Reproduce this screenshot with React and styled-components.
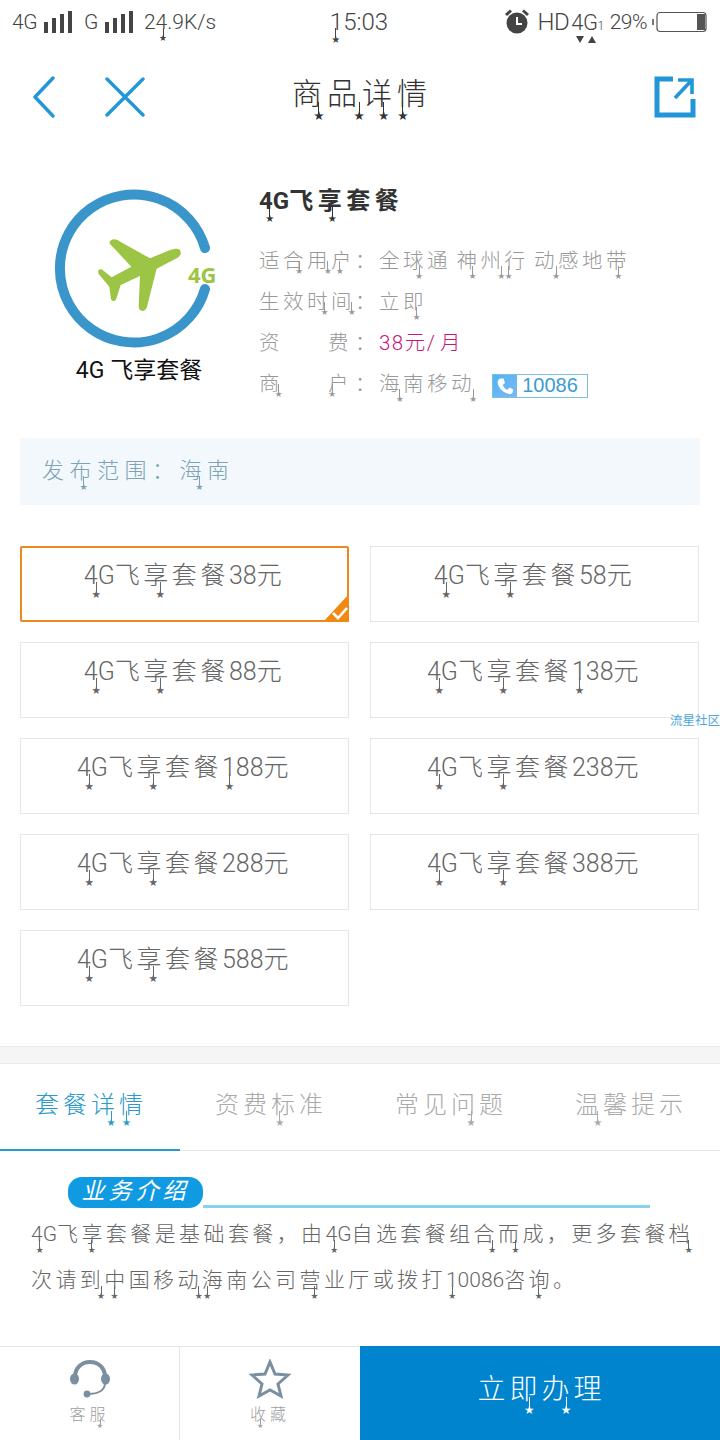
import React from 'react';
import styled, { createGlobalStyle } from 'styled-components';

const GlobalStyle = createGlobalStyle`
  html, body { margin: 0; padding: 0; background: #fff; }
  body { font-family: Roboto, "Noto Sans CJK SC", sans-serif; }
`;

const Page = styled.div`
  width: 720px;
  height: 1440px;
  position: relative;
  overflow: hidden;
  display: flex;
  flex-direction: column;
  background: #fff;
  font-weight: 300;
`;

// every char gets its own span, some carry the little star hanging under them
const Char = styled.span`
  position: relative;
  letter-spacing: ${(p) => (p.$latin ? '0' : 'inherit')};

  ${(p) => p.$at != null && `
    &::before {
      content: '';
      position: absolute;
      left: ${p.$at}%;
      top: 0.85em;
      height: 0.42em;
      width: 1px;
      background: currentColor;
    }
    &::after {
      content: '★';
      position: absolute;
      left: ${p.$at}%;
      top: 2.7em;
      margin-left: -0.4em;
      font-size: 0.42em;
      line-height: 1;
      font-family: "DejaVu Sans", sans-serif;
      letter-spacing: 0;
      font-weight: 400;
    }
  `}
`;

const Glyphs = ({ text, marks = {} }) => (
  <>
    {Array.from(text).map((c, i) => (
      <Char key={i} $latin={/[0-9A-Za-z.:/%]/.test(c)} $at={marks[i]}>{c}</Char>
    ))}
  </>
);

const StatusBar = styled.div`
  height: 44px;
  display: grid;
  grid-template-columns: 1fr 1fr 1fr;
  align-items: center;
  padding: 0 12px;
  box-sizing: border-box;
  color: #444;
`;

const StatusLeft = styled.div`
  display: flex;
  align-items: center;
  gap: 7px;
  font-size: 21px;
`;

const StatusRight = styled.div`
  display: flex;
  align-items: center;
  justify-content: flex-end;
  font-size: 22px;
`;

const StatusClock = styled.div`
  text-align: center;
  font-size: 24px;
  margin-left: -2px;
`;

const Narrow = styled.span`
  display: inline-block;
  letter-spacing: -0.5px;
  font-size: ${(p) => p.$size || 21}px;
  margin: 0 ${(p) => p.$gap || 0}px 0 ${(p) => p.$lead || 0}px;
`;

const NavBar = styled.div`
  height: 106px;
  display: flex;
  align-items: center;
  padding: 0 24px 0 32px;
  position: relative;
`;

const NavIcons = styled.div`
  display: flex;
  align-items: center;
  gap: 49px;
  width: 250px;
`;

const NavTitle = styled.div`
  flex: 1;
  font-size: 30px;
  line-height: 40px;
  letter-spacing: 5px;
  color: #333;
  margin-left: 10px;
  margin-top: -6px;
`;

const Product = styled.div`
  height: 288px;
  box-sizing: border-box;
  padding: 39px 0 0 55px;
  display: flex;
`;

const LogoColumn = styled.div`
  width: 204px;
  flex: none;
`;

const LogoCaption = styled.div`
  width: 168px;
  text-align: center;
  font-size: 23px;
  line-height: 30px;
  color: #111;
  font-weight: 400;
  margin-top: 1px;
`;

const Info = styled.div`
  flex: 1;
`;

const InfoTitle = styled.div`
  font-size: 24px;
  line-height: 24px;
  font-weight: 700;
  letter-spacing: 4.5px;
  color: #333;
  margin-bottom: 25px;
`;

const InfoRow = styled.div`
  display: flex;
  align-items: center;
  height: 41px;
  font-size: 20.5px;
  letter-spacing: 3.5px;
  word-spacing: -3px;
  color: #999;
`;

const RowLabel = styled.span`
  width: 96px;
  display: flex;
  justify-content: space-between;
  padding-right: 3px;
  box-sizing: border-box;
`;

const RowColon = styled.span`
  width: 24px;
`;

const Price = styled.span`
  color: #c8177a;
  letter-spacing: 1.5px;
`;

const PhoneTag = styled.span`
  display: inline-flex;
  align-items: center;
  height: 24px;
  width: 96px;
  box-sizing: border-box;
  border: 1px solid #7cc0e6;
  margin: 8px 0 0 17px;
`;

const PhoneIcon = styled.span`
  width: 24px;
  height: 100%;
  flex: none;
  display: flex;
  align-items: center;
  justify-content: center;
  background: linear-gradient(135deg, #4fb4f2, #7cb8f5);
`;

const PhoneNumber = styled.span`
  flex: 1;
  text-align: center;
  padding-right: 4px;
  font-family: "Liberation Sans", sans-serif;
  font-size: 20px;
  letter-spacing: 0;
  color: #3d9bd0;
`;

const RangeBox = styled.div`
  margin: 0 20px;
  height: 67px;
  padding-left: 22px;
  display: flex;
  align-items: center;
  background: #f2f8fc;
  font-size: 22px;
  letter-spacing: 5.5px;
  color: #7ea3b4;
  padding-bottom: 8px;
  box-sizing: border-box;
`;

const RangeText = styled.span``;

const PlanGrid = styled.div`
  margin-top: 41px;
  padding: 0 21px 0 20px;
  display: grid;
  grid-template-columns: 329px 329px;
  grid-auto-rows: 76px;
  gap: 20px 21px;
`;

const PlanCard = styled.div`
  position: relative;
  box-sizing: border-box;
  border: ${(p) => (p.$active ? '2px solid #e98a1f' : '1px solid #e6e6e6')};
  border-radius: ${(p) => (p.$active ? '2px' : '0')};
  padding-top: ${(p) => (p.$active ? '13px' : '14px')};
  text-align: center;
  font-size: 25px;
  line-height: 30px;
  letter-spacing: 3.5px;
  color: #666;
`;

const CheckCorner = styled.svg`
  position: absolute;
  right: -2px;
  bottom: -2px;
  width: 26px;
  height: 28px;
`;

const Divider = styled.div`
  margin-top: 40px;
  height: 18px;
  box-sizing: border-box;
  background: #f5f5f5;
  border-top: 1px solid #ececec;
  border-bottom: 1px solid #ececec;
`;

const Tabs = styled.div`
  height: 87px;
  display: grid;
  grid-template-columns: repeat(4, 180px);
  border-bottom: 1px solid #e8e8e8;
  box-sizing: border-box;
`;

const Tab = styled.div`
  display: flex;
  justify-content: center;
  padding: 25px 0 0 2px;
  font-size: 24px;
  line-height: 32px;
  letter-spacing: 4px;
  height: 87px;
  box-sizing: border-box;
  color: ${(p) => (p.$active ? '#2a9ac8' : '#aaa')};
  border-bottom: ${(p) => (p.$active ? '2px solid #2a9ac8' : '0')};
`;

const Detail = styled.div`
  flex: 1;
  padding: 26px 24px 0 31px;
`;

const DetailHead = styled.div`
  display: flex;
  align-items: flex-end;
  margin-left: 37px;
  width: 582px;
`;

const Pill = styled.div`
  width: 135px;
  height: 31px;
  flex: none;
  border-radius: 14px;
  background: #0f9ae2;
  color: #fff;
  font-size: 23px;
  line-height: 30px;
  font-style: italic;
  font-weight: 400;
  letter-spacing: 4px;
  text-align: center;
`;

const PillRule = styled.div`
  flex: 1;
  height: 3px;
  background: #85d3f0;
`;

const Paragraph = styled.div`
  margin-top: 3px;
  font-size: 21px;
  line-height: 46px;
  letter-spacing: 3.4px;
  color: #666;
`;

const BottomBar = styled.div`
  height: 94px;
  display: grid;
  grid-template-columns: 180px 180px 360px;
  border-top: 1px solid #e6e6e6;
  box-sizing: border-box;
`;

const BarItem = styled.div`
  display: flex;
  flex-direction: column;
  align-items: center;
  gap: 4px;
  padding-top: 12px;
  box-sizing: border-box;
  border-right: ${(p) => (p.$line ? '1px solid #e6e6e6' : '0')};
  font-size: 16px;
  line-height: 24px;
  letter-spacing: 4px;
  color: #a0a0a0;
`;

const ApplyButton = styled.div`
  margin-top: -1px;
  padding-left: 3px;
  background: #0084cd;
  color: #fff;
  text-align: center;
  font-size: 28px;
  line-height: 88px;
  letter-spacing: 4px;
`;

const Watermark = styled.div`
  position: absolute;
  right: 0;
  top: 713px;
  font-size: 12.5px;
  line-height: 16px;
  color: #4da6e0;
  font-weight: 400;
`;

const Signal = () => (
  <svg width="28" height="22" viewBox="0 0 28 22">
    <rect x="0" y="11" width="4" height="11" fill="#444" />
    <rect x="8" y="7" width="4" height="15" fill="#444" />
    <rect x="16" y="3" width="4" height="19" fill="#444" />
    <rect x="24" y="0" width="4" height="22" fill="#444" />
  </svg>
);

const AlarmIcon = () => (
  <svg width="24" height="26" viewBox="0 0 24 26">
    <circle cx="12" cy="14" r="10.5" fill="#444" />
    <path d="M1 6 L6 1.5 M23 6 L18 1.5" stroke="#444" strokeWidth="3" />
    <path d="M12 8 V15 H17" stroke="#fff" strokeWidth="2" fill="none" />
  </svg>
);

const NetArrows = () => (
  <svg width="22" height="10" viewBox="0 0 22 10" style={{ position: 'absolute', left: 5, top: 25 }}>
    <path d="M0 1 H8 L4 8 Z M12 8 H20 L16 1 Z" fill="#444" />
  </svg>
);

const NetBadge = styled.span`
  position: relative;
  display: inline-block;
  margin: 0 6px 0 2px;
`;

const Battery = () => (
  <svg width="56" height="22" viewBox="0 0 56 22" style={{ marginLeft: 5 }}>
    <rect x="0" y="8" width="2" height="6" fill="#777" />
    <rect x="5" y="1.5" width="49" height="19" rx="3" fill="none" stroke="#555" strokeWidth="1.2" />
    <rect x="45" y="3" width="8" height="16" fill="#555" />
  </svg>
);

const BackIcon = () => (
  <svg width="24" height="42" viewBox="0 0 24 42">
    <path d="M21 2 L3 21 L21 40" fill="none" stroke="#2196d8" strokeWidth="3.4" strokeLinecap="round" strokeLinejoin="round" />
  </svg>
);

const CloseIcon = () => (
  <svg width="40" height="40" viewBox="0 0 40 40">
    <path d="M2 2 L38 38 M38 2 L2 38" fill="none" stroke="#2196d8" strokeWidth="3.4" strokeLinecap="round" />
  </svg>
);

const ShareIcon = () => (
  <svg width="42" height="42" viewBox="0 0 42 42">
    <path d="M19 3 H3 V39 H39 V23" fill="none" stroke="#2196d8" strokeWidth="5" />
    <path d="M21 22 L37 5 M24 4 H38 V18" fill="none" stroke="#2196d8" strokeWidth="3.6" />
  </svg>
);

const PlanLogo = () => (
  <svg width="170" height="170" viewBox="50 185 170 170" style={{ display: 'block', margin: '-4px 0 0 -5px' }}>
    <path d="M205 248 A74 74 0 1 0 205 289" fill="none" stroke="#3a96ca" strokeWidth="10" strokeLinecap="round" />
    <g transform="translate(30 170) scale(0.3333)">
      <path
        d="M452 245 C450 232 435 236 420 240 L360 265 L262 210 C250 204 234 212 240 222 L304 290 L245 322 L215 298 C205 296 202 304 206 312 L238 350 L243 388 C246 396 256 394 259 386 L272 345 L330 318 L326 412 C328 426 344 426 350 414 L380 296 L440 265 C448 260 454 254 452 245 Z"
        fill="#9dc545"
      />
    </g>
    <text x="188" y="283" fontSize="22" fontWeight="700" fontFamily="Open Sans, sans-serif" fill="#9dc545">4G</text>
  </svg>
);

const PhoneGlyph = () => (
  <svg width="18" height="18" viewBox="0 0 24 24">
    <path d="M6 2 L10 2 L12 8 L9 10.5 C10.5 14 12.5 16 15.5 17 L18 14 L23 16.5 L22 21 C21 23 18 23 15 22 C9 20 4 15 2.5 9 C1.5 6 3 3 6 2 Z" fill="#fff" />
  </svg>
);

const HeadsetIcon = () => (
  <svg width="42" height="40" viewBox="0 0 42 40">
    <path d="M6 18 C6 -2 36 -2 36 18" fill="none" stroke="#7a8f9f" strokeWidth="4" />
    <ellipse cx="5.5" cy="20" rx="4.5" ry="5.5" fill="#7a8f9f" />
    <ellipse cx="36.5" cy="20" rx="4.5" ry="5.5" fill="#7a8f9f" />
    <path d="M36 24 C36 32 28 35 19 35" fill="none" stroke="#7a8f9f" strokeWidth="2" />
    <circle cx="18" cy="35" r="3.4" fill="#7a8f9f" />
  </svg>
);

const StarIcon = () => (
  <svg width="42" height="40" viewBox="0 0 42 40">
    <path d="M21 3 L26 15 L39 16 L29 25 L32 37 L21 31 L10 37 L13 25 L3 16 L16 15 Z" fill="none" stroke="#7a8f9f" strokeWidth="3" strokeLinejoin="miter" />
  </svg>
);

const planMarks = { 0: 85, 3: 57 };

const plans = [
  { text: '4G飞享套餐38元', marks: planMarks, active: true },
  { text: '4G飞享套餐58元', marks: planMarks },
  { text: '4G飞享套餐88元', marks: planMarks },
  { text: '4G飞享套餐138元', marks: { ...planMarks, 6: 50 } },
  { text: '4G飞享套餐188元', marks: { ...planMarks, 6: 50 } },
  { text: '4G飞享套餐238元', marks: planMarks },
  { text: '4G飞享套餐288元', marks: planMarks },
  { text: '4G飞享套餐388元', marks: planMarks },
  { text: '4G飞享套餐588元', marks: planMarks },
];

const tabs = [
  { text: '套餐详情', marks: { 2: 70, 3: 25 }, active: true },
  { text: '资费标准', marks: { 2: 30 } },
  { text: '常见问题', marks: { 2: 70 } },
  { text: '温馨提示', marks: { 0: 80 } },
];

const intro = '4G飞享套餐是基础套餐，由4G自选套餐组合而成，更多套餐档次请到中国移动海南公司营业厅或拨打10086咨询。';
const introMarks = { 0: 70, 3: 40, 13: 70, 20: 75, 21: 70, 28: 80, 31: 85, 32: 40, 35: 85, 36: 20, 40: 60, 46: 50, 52: 40 };

export default function App() {
  return (
    <Page>
      <GlobalStyle />
      <StatusBar>
        <StatusLeft>
          <Narrow>4G</Narrow>
          <Signal />
          <Narrow $lead={5}>G</Narrow>
          <Signal />
          <Narrow $lead={4}><Glyphs text="24.9K/s" marks={{ 1: 60 }} /></Narrow>
        </StatusLeft>
        <StatusClock><Glyphs text="15:03" marks={{ 0: 40 }} /></StatusClock>
        <StatusRight>
          <AlarmIcon />
          <Narrow $size={24} $lead={9}>HD</Narrow>
          <NetBadge>
            <Narrow $size={22}>4G</Narrow>
            <Narrow $size={12}>1</Narrow>
            <NetArrows />
          </NetBadge>
          <Narrow $size={21}>29%</Narrow>
          <Battery />
        </StatusRight>
      </StatusBar>

      <NavBar>
        <NavIcons>
          <BackIcon />
          <CloseIcon />
        </NavIcons>
        <NavTitle><Glyphs text="商品详情" marks={{ 0: 75, 1: 90, 2: 60, 3: 15 }} /></NavTitle>
        <ShareIcon />
      </NavBar>

      <Product>
        <LogoColumn>
          <PlanLogo />
          <LogoCaption>4G 飞享套餐</LogoCaption>
        </LogoColumn>
        <Info>
          <InfoTitle><Glyphs text="4G飞享套餐" marks={{ 0: 75, 3: 50 }} /></InfoTitle>
          <InfoRow>
            <RowLabel><Char>适</Char><Char $at={65}>合</Char><Char $at={85}>用</Char><Char $at={35}>户</Char></RowLabel>
            <RowColon>：</RowColon>
            <span><Glyphs text="全球通 神州行 动感地带" marks={{ 1: 65, 4: 65, 5: 85, 6: 15, 8: 90, 11: 50 }} /></span>
          </InfoRow>
          <InfoRow>
            <RowLabel><Char>生</Char><Char>效</Char><Char $at={72}>时</Char><Char $at={85}>间</Char></RowLabel>
            <RowColon>：</RowColon>
            <span><Glyphs text="立即" marks={{ 1: 55 }} /></span>
          </InfoRow>
          <InfoRow>
            <RowLabel><Char>资</Char><Char>费</Char></RowLabel>
            <RowColon>：</RowColon>
            <Price>38元/ 月</Price>
          </InfoRow>
          <InfoRow>
            <RowLabel><Char $at={80}>商</Char><Char $at={15}>户</Char></RowLabel>
            <RowColon>：</RowColon>
            <span><Glyphs text="海南移动" marks={{ 0: 85, 3: 90 }} /></span>
            <PhoneTag>
              <PhoneIcon><PhoneGlyph /></PhoneIcon>
              <PhoneNumber>10086</PhoneNumber>
            </PhoneTag>
          </InfoRow>
        </Info>
      </Product>

      <RangeBox><RangeText><Glyphs text="发布范围：海南" marks={{ 1: 50, 5: 70 }} /></RangeText></RangeBox>

      <PlanGrid>
        {plans.map((plan) => (
          <PlanCard key={plan.text} $active={plan.active}>
            <Glyphs text={plan.text} marks={plan.marks} />
            {plan.active && (
              <CheckCorner viewBox="0 0 26 28">
                <path d="M0 28 L26 0 V28 Z" fill="#f08a14" />
                <path d="M10 19 L15 24 L24 14" fill="none" stroke="#fff" strokeWidth="2.6" />
              </CheckCorner>
            )}
          </PlanCard>
        ))}
      </PlanGrid>

      <Divider />

      <Tabs>
        {tabs.map((tab) => (
          <Tab key={tab.text} $active={tab.active}>
            <span><Glyphs text={tab.text} marks={tab.marks} /></span>
          </Tab>
        ))}
      </Tabs>

      <Detail>
        <DetailHead>
          <Pill>业务介绍</Pill>
          <PillRule />
        </DetailHead>
        <Paragraph><Glyphs text={intro} marks={introMarks} /></Paragraph>
      </Detail>

      <BottomBar>
        <BarItem $line>
          <HeadsetIcon />
          <span><Glyphs text="客服" marks={{ 1: 50 }} /></span>
        </BarItem>
        <BarItem>
          <StarIcon />
          <span><Glyphs text="收藏" marks={{ 0: 50 }} /></span>
        </BarItem>
        <ApplyButton><Glyphs text="立即办理" marks={{ 1: 60, 2: 75 }} /></ApplyButton>
      </BottomBar>

      <Watermark>流星社区</Watermark>
    </Page>
  );
}
